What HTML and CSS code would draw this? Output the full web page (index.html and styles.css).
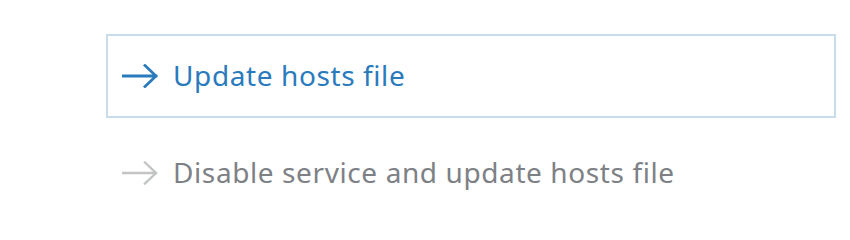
FILE: index.html
```html
<!DOCTYPE html>
<html>
<head>
<meta charset="utf-8">
<link rel="stylesheet" href="styles.css">
</head>
<body>
<div class="list">
  <div class="option active">
    <svg class="arrow" width="36" height="24" viewBox="0 0 36 24"><path d="M1 12 H34 M23 1.5 L34 12 L23 22.5" fill="none" stroke="currentColor" stroke-width="2.8" stroke-linecap="square"/></svg>
    <span class="label">Update hosts file</span>
  </div>
  <div class="option disabled">
    <svg class="arrow" width="36" height="24" viewBox="0 0 36 24"><path d="M1 12 H34 M23 1.5 L34 12 L23 22.5" fill="none" stroke="currentColor" stroke-width="2.4" stroke-linecap="square"/></svg>
    <span class="label">Disable service and update hosts file</span>
  </div>
</div>
</body>
</html>
```
FILE: styles.css
```css
html, body {
  margin: 0;
  padding: 0;
  background: #ffffff;
}
body {
  width: 850px;
  height: 227px;
  overflow: hidden;
  font-family: "Noto Sans", "Open Sans", sans-serif;
}
.list {
  display: flex;
  flex-direction: column;
  gap: 13px;
  padding: 34px 0 0 106px;
  width: 730px;
}
.option {
  display: flex;
  align-items: center;
  height: 84px;
  box-sizing: border-box;
  border: 2px solid transparent;
  padding-left: 14px;
  gap: 15px;
}
.option.active {
  border-color: #c8dcea;
  color: #2a7bbd;
}
.option.disabled {
  color: #7d8186;
}
.option.disabled .arrow {
  color: #c2c4c6;
}
.arrow {
  display: block;
  flex: none;
}
.label {
  font-size: 28px;
  letter-spacing: 0.6px;
  line-height: 1;
  margin-top: -2px;
}
```
